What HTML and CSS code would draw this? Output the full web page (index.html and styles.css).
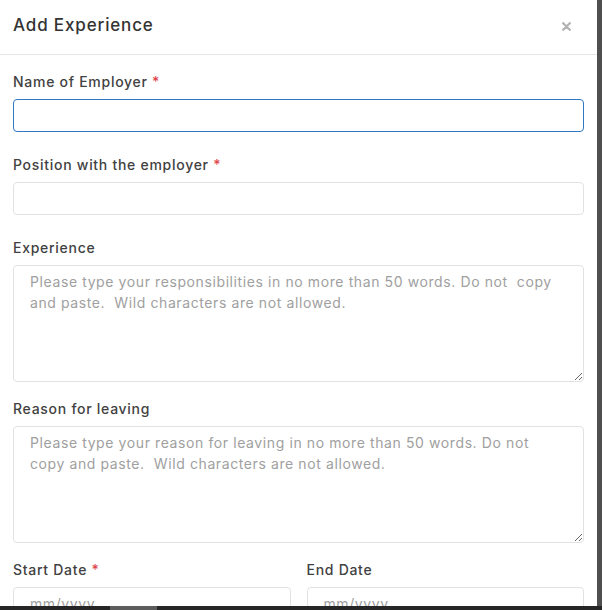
FILE: index.html
```html
<!DOCTYPE html>
<html lang="en">
<head>
<meta charset="utf-8">
<title>Add Experience</title>
<link rel="stylesheet" href="styles.css">
</head>
<body>
<div class="screen">
  <div class="stage">
    <div class="modal">
      <div class="modal-header">
        <h4 class="modal-title">Add Experience</h4>
        <span class="close" aria-label="Close">
          <svg width="9" height="9" viewBox="0 0 9 9"><path d="M1.2 1.2 L7.8 7.8 M7.8 1.2 L1.2 7.8" stroke="#b3b3b3" stroke-width="2.3" stroke-linecap="round" fill="none"/></svg>
        </span>
      </div>
      <div class="modal-body">
        <div class="group group-input">
          <label class="label">Name of Employer <span class="req">*</span></label>
          <input class="control focused" type="text">
        </div>
        <div class="group group-input">
          <label class="label">Position with the employer <span class="req">*</span></label>
          <input class="control" type="text">
        </div>
        <div class="group group-area">
          <label class="label">Experience</label>
          <textarea class="control area" placeholder="Please type your responsibilities in no more than 50 words. Do not  copy and paste.  Wild characters are not allowed."></textarea>
        </div>
        <div class="group group-area">
          <label class="label">Reason for leaving</label>
          <textarea class="control area" placeholder="Please type your reason for leaving in no more than 50 words. Do not copy and paste.  Wild characters are not allowed."></textarea>
        </div>
        <div class="row">
          <div class="group">
            <label class="label">Start Date <span class="req">*</span></label>
            <input class="control" type="text" placeholder="mm/yyyy">
          </div>
          <div class="group">
            <label class="label">End Date</label>
            <input class="control" type="text" placeholder="mm/yyyy">
          </div>
        </div>
      </div>
    </div>
    <div class="backdrop"></div>
  </div>
  <div class="hscroll"><div class="thumb"></div></div>
</div>
</body>
</html>
```
FILE: styles.css
```css
* { box-sizing: border-box; }
html, body { margin: 0; padding: 0; }
body {
  font-family: Inter, "Open Sans", sans-serif;
  color: #3a3a3a;
  background: #4f4f4f;
}
.screen {
  width: 602px;
  height: 610px;
  display: flex;
  flex-direction: column;
  overflow: hidden;
}
.stage {
  flex: 1;
  display: flex;
  overflow: hidden;
}
.modal {
  width: 597px;
  flex: none;
  background: #fff;
  align-self: flex-start;
}
.backdrop {
  flex: 1;
  background: #4f4f4f;
}
.hscroll {
  height: 4px;
  background: #262626;
  flex: none;
  padding-left: 110px;
}
.thumb {
  width: 47px;
  height: 4px;
  background: #5c5c5c;
}
.modal-header {
  height: 55px;
  border-bottom: 1px solid #e6e6e6;
  display: flex;
  align-items: center;
  justify-content: space-between;
  padding: 0 26px 5px 13px;
}
.modal-title {
  margin: 0;
  font-size: 17px;
  font-weight: 470;
  letter-spacing: 0.85px;
  color: #333;
  line-height: 24px;
}
.close {
  display: flex;
  margin-top: 4px;
}
.modal-body {
  padding: 16px 13px 0 13px;
}
.group {
  display: flex;
  flex-direction: column;
}
.group-input { margin-bottom: 22px; }
.group-area { margin-bottom: 16px; }
.label {
  font-size: 14px;
  line-height: 21px;
  font-weight: 470;
  letter-spacing: 0.72px;
  color: #414141;
  margin-bottom: 7px;
}
.req { color: #e0474c; }
.control {
  display: block;
  width: 100%;
  height: 33px;
  border: 1px solid #e2e2e2;
  border-radius: 4px;
  padding: 5px 16px;
  font-family: inherit;
  font-size: 14px;
  line-height: 21px;
  letter-spacing: 0.6px;
  color: #333;
  background: #fff;
  outline: none;
}
.control::placeholder { color: #a0a0a0; }
.control.focused { border-color: #2f78c4; }
.area {
  height: 117px;
  resize: vertical;
}
.row {
  display: grid;
  grid-template-columns: 1fr 1fr;
  gap: 16px;
}
```
